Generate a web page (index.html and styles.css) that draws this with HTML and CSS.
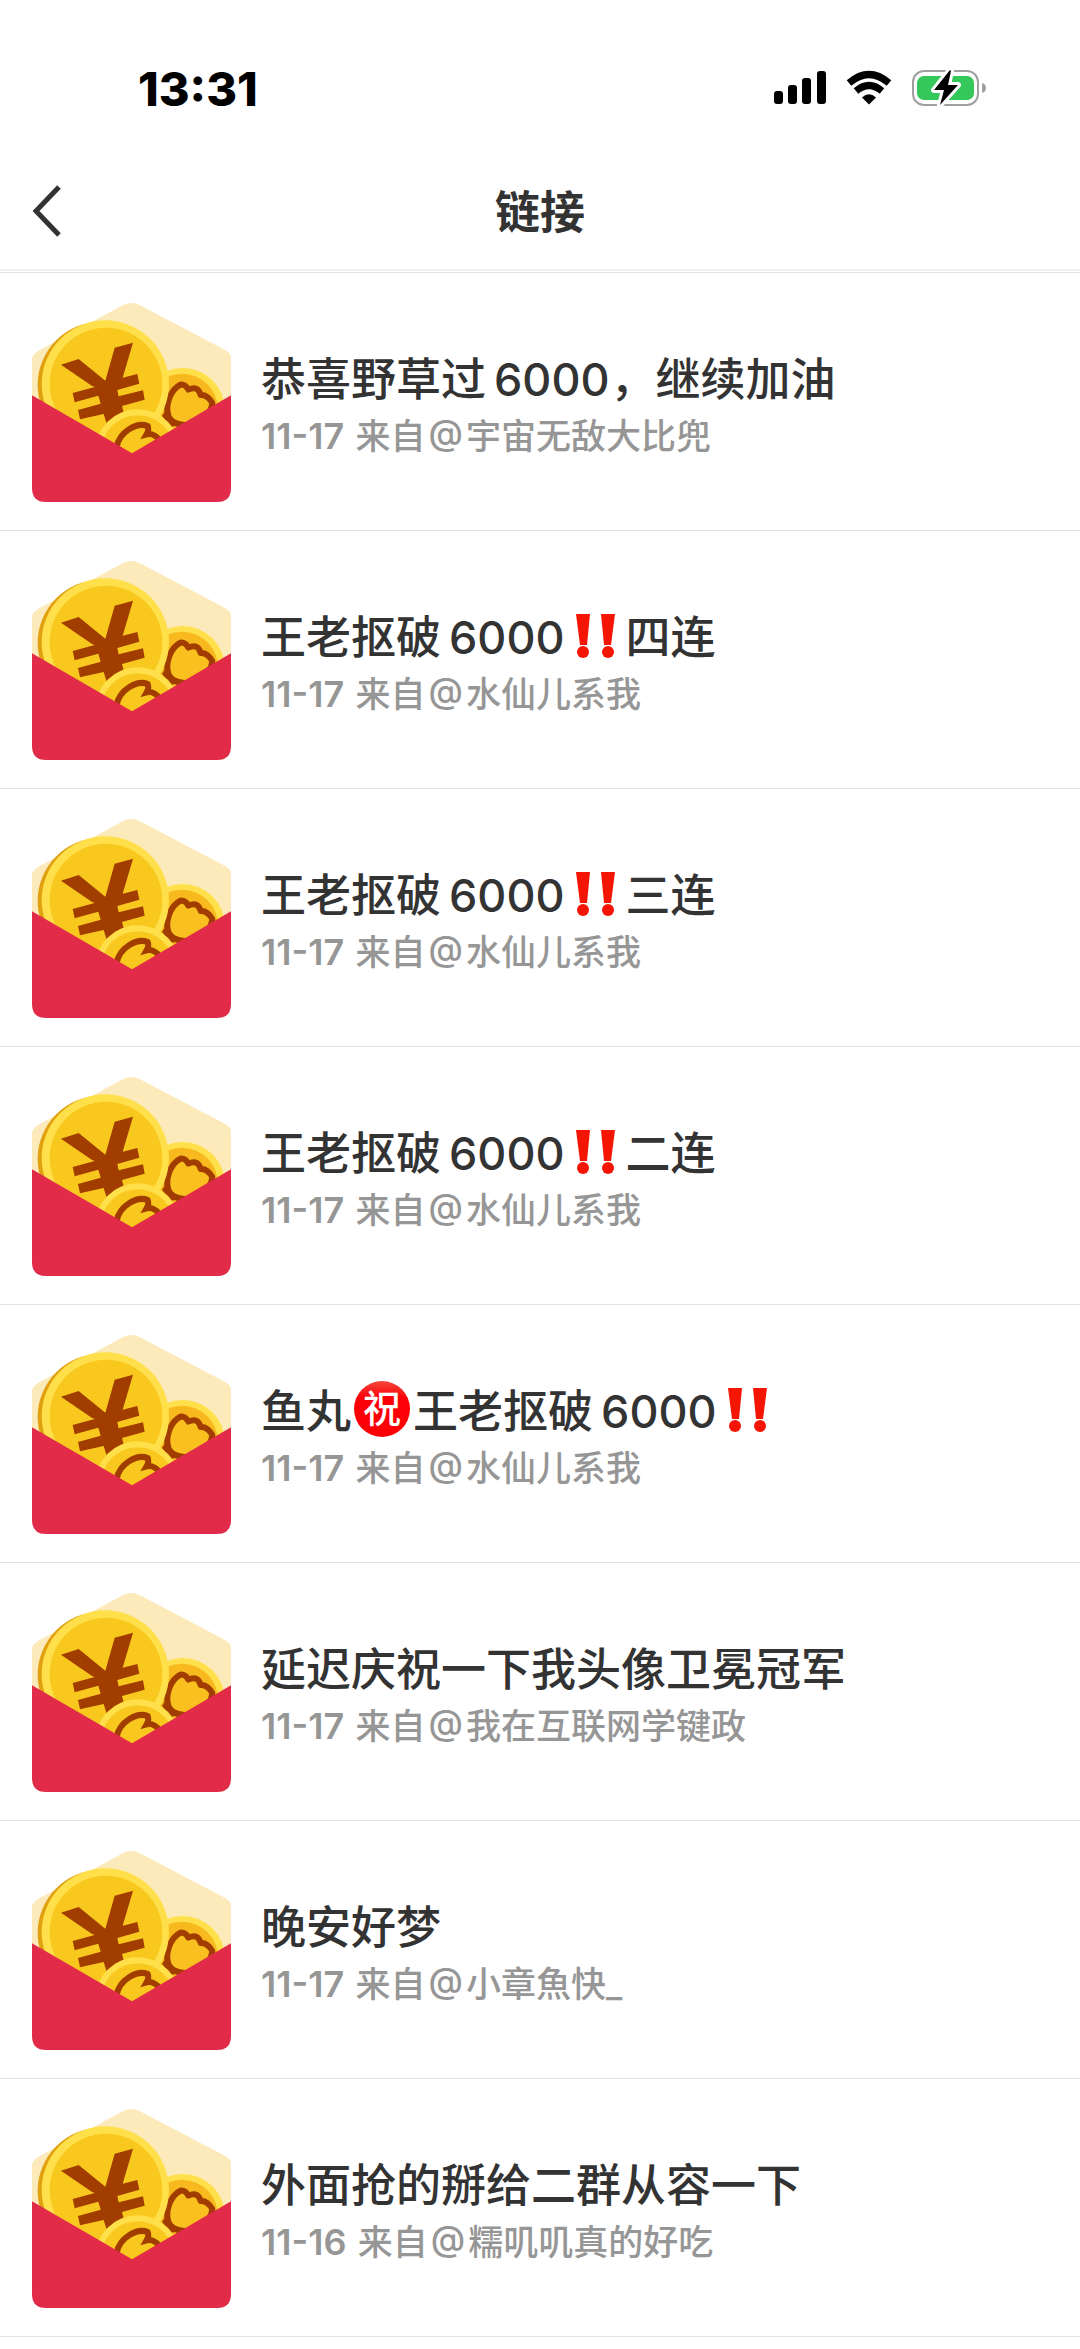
FILE: index.html
```html
<!DOCTYPE html>
<html lang="zh-CN">

<head>
    <meta charset="UTF-8">
    <meta name="viewport" content="width=device-width, initial-scale=1">
    <title>链接</title>
    <link rel="stylesheet" href="styles.css">
</head>

<body>
    <!-- Iconos reutilizados en la lista -->
    <svg class="sprite" aria-hidden="true">
        <symbol id="sobre" viewBox="96 128 597 597">
            <path fill="#fdeabb" d="M96 292Q102 276 126 265L368 135Q394 121 420 135L670 266Q693 278 693 290V450H96Z" />
            <circle cx="548" cy="450" r="127" fill="#ffe04b" />
            <circle cx="546" cy="448" r="108" fill="#f7b91e" />
            <path fill="#fac01f" stroke="#a23d00" stroke-width="18" stroke-linejoin="round" d="M512 480C486 440 515 385 541 373Q556 371 565 388Q594 374 602 404Q622 402 637 428Q634 455 610 475Q555 510 512 480Z" />
            <path fill="#a23d00" d="M507 405Q501 430 501 445L486 466L512 500L538 494L510 462Z" />
            <circle cx="303" cy="374" r="190" fill="#e0a00f" />
            <circle cx="316" cy="371" r="191" fill="#ffe04b" />
            <circle cx="318" cy="371" r="169" fill="#f9c81f" />
            <path fill="#a23d00" d="M183 313L236 296L316 361L344 262L399 247L368 352L412 341L418 370L352 389L356 408L429 390L434 418L366 437L372 460L320 490L311 461L240 477L234 449L302 430L295 406L224 426L218 398L284 380L275 376Z" />
            <circle cx="413" cy="575" r="128" fill="#ffe04b" />
            <circle cx="413" cy="575" r="110" fill="#f9c81f" />
            <path fill="none" stroke="#a23d00" stroke-width="18" d="M350 560C358 515 410 484 443 497Q448 508 440 522Q460 516 480 540" />
            <path fill="#e12b49" d="M96 405L396 579L693 405V683Q693 725 651 725H138Q96 725 96 683Z" />
        </symbol>
        <symbol id="exclama" viewBox="0 0 60 44">
            <path fill="#f51505" d="M10 0H24L21 31H14ZM35 0H49L45 31H38Z" />
            <circle cx="17" cy="38" r="6" fill="#f51505" />
            <circle cx="42" cy="38" r="6" fill="#f51505" />
        </symbol>
    </svg>

    <div class="estado">
        <time class="hora">13:31</time>
        <div class="iconos">
            <svg width="52" height="36" viewBox="0 0 52 36" aria-label="信号">
                <rect x="0" y="21" width="9" height="13" rx="3" />
                <rect x="14" y="15" width="9" height="19" rx="3" />
                <rect x="28" y="8" width="9" height="26" rx="3" />
                <rect x="43" y="1" width="9" height="33" rx="3" />
            </svg>
            <svg width="46" height="36" viewBox="0 0 46 36" aria-label="Wi-Fi">
                <g fill="none" stroke="#000">
                    <path stroke-width="7" d="M3 13Q23 -4 43 13" />
                    <path stroke-width="7" d="M10 21Q23 10 36 21" />
                </g>
                <path d="M16 27.5Q23 21 30 27.5L23 34.500Z" />
            </svg>
            <svg width="74" height="36" viewBox="0 0 74 36" aria-label="充电中">
                <rect x="1" y="1" width="65" height="34" rx="11" fill="none" stroke="#a0a0a0" stroke-width="2" />
                <rect x="5" y="6" width="57" height="24" rx="7" fill="#34c759" />
                <path fill="#a0a0a0" d="M70 13Q74 14 74 18T70 23Z" />
                <path fill="#000" stroke="#fff" stroke-width="6" stroke-linejoin="round" paint-order="stroke" d="M38 0L22 20H32L28 35L46 15H36L39 1Z" />
            </svg>
        </div>
    </div>

    <header class="nav">
        <button type="button" class="volver" aria-label="返回">
            <svg width="30" height="52" viewBox="0 0 30 52">
                <path fill="none" stroke="#333" stroke-width="5" d="M27 2L4 26L27 50" />
            </svg>
        </button>
        <h1>链接</h1>
    </header>

    <main class="lista">
        <a class="fila" href="#">
            <svg class="foto"><use href="#sobre" /></svg>
            <div class="texto">
                <h2>恭喜野草过<span class="num">6000</span>，继续加油</h2>
                <p><time>11-17</time> 来自<span class="arroba">@</span>宇宙无敌大比兜</p>
            </div>
        </a>
        <a class="fila" href="#">
            <svg class="foto"><use href="#sobre" /></svg>
            <div class="texto">
                <h2>王老抠破<span class="num">6000</span><svg class="emoji" role="img" aria-label="‼️"><use href="#exclama" /></svg>四连</h2>
                <p><time>11-17</time> 来自<span class="arroba">@</span>水仙儿系我</p>
            </div>
        </a>
        <a class="fila" href="#">
            <svg class="foto"><use href="#sobre" /></svg>
            <div class="texto">
                <h2>王老抠破<span class="num">6000</span><svg class="emoji" role="img" aria-label="‼️"><use href="#exclama" /></svg>三连</h2>
                <p><time>11-17</time> 来自<span class="arroba">@</span>水仙儿系我</p>
            </div>
        </a>
        <a class="fila" href="#">
            <svg class="foto"><use href="#sobre" /></svg>
            <div class="texto">
                <h2>王老抠破<span class="num">6000</span><svg class="emoji" role="img" aria-label="‼️"><use href="#exclama" /></svg>二连</h2>
                <p><time>11-17</time> 来自<span class="arroba">@</span>水仙儿系我</p>
            </div>
        </a>
        <a class="fila" href="#">
            <svg class="foto"><use href="#sobre" /></svg>
            <div class="texto">
                <h2>鱼丸<span class="sello">祝</span>王老抠破<span class="num">6000</span><svg class="emoji" role="img" aria-label="‼️"><use href="#exclama" /></svg></h2>
                <p><time>11-17</time> 来自<span class="arroba">@</span>水仙儿系我</p>
            </div>
        </a>
        <a class="fila" href="#">
            <svg class="foto"><use href="#sobre" /></svg>
            <div class="texto">
                <h2>延迟庆祝一下我头像卫冕冠军</h2>
                <p><time>11-17</time> 来自<span class="arroba">@</span>我在互联网学键政</p>
            </div>
        </a>
        <a class="fila" href="#">
            <svg class="foto"><use href="#sobre" /></svg>
            <div class="texto">
                <h2>晚安好梦</h2>
                <p><time>11-17</time> 来自<span class="arroba">@</span>小章魚快_</p>
            </div>
        </a>
        <a class="fila" href="#">
            <svg class="foto"><use href="#sobre" /></svg>
            <div class="texto">
                <h2>外面抢的掰给二群从容一下</h2>
                <p><time>11-16</time> 来自<span class="arroba">@</span>糯叽叽真的好吃</p>
            </div>
        </a>
    </main>
</body>

</html>
```
FILE: styles.css
```css
body {
    margin: 0;
    background-color: #fff;
    color: #333;
    font-family: Inter, "Noto Sans CJK SC", sans-serif;
}

.sprite {
    display: none;
}

.estado {
    display: flex;
    justify-content: space-between;
    align-items: center;
    height: 150px;
    padding: 26px 94px 0 138px;
    box-sizing: border-box;
    color: #000;
}

.hora {
    font-size: 47px;
    font-weight: 800;
}

.iconos {
    display: flex;
    align-items: center;
    gap: 20px;
}

.nav {
    display: grid;
    grid-template-columns: 1fr auto 1fr;
    align-items: center;
    height: 121px;
    padding: 2px 32px 0;
    box-sizing: border-box;
    border-bottom: 2px solid #efefef;
}

.volver {
    justify-self: start;
    display: flex;
    padding: 0;
    border: none;
    background: none;
    cursor: pointer;
}

.nav h1 {
    margin: 0;
    padding-top: 4px;
    font-size: 45px;
    line-height: 66px;
    font-weight: 700;
}

.lista {
    margin-top: 1px;
    border-top: 1px solid #e0e0e0;
}

.fila {
    display: flex;
    align-items: center;
    gap: 30px;
    padding: 30px 32px 28px;
    border-bottom: 1px solid #e0e0e0;
    color: inherit;
    text-decoration: none;
}

.foto {
    flex: none;
    width: 199px;
    height: 199px;
}

.texto h2 {
    margin: 0;
    font-size: 45px;
    line-height: 66px;
    font-weight: 500;
}

.texto p {
    margin: 0;
    font-size: 35px;
    line-height: 46px;
    font-weight: 500;
    color: #969696;
}

.texto time {
    margin-right: 2px;
    font-size: 36px;
    font-weight: 600;
}

.num {
    margin: 0 1px 0 8px;
}

.arroba {
    margin: 0 3px;
    font-feature-settings: "case";
}

.emoji {
    width: 60px;
    height: 44px;
    vertical-align: -4px;
}

.sello {
    display: inline-block;
    width: 56px;
    height: 56px;
    margin: 0 3px;
    border-radius: 50%;
    background: linear-gradient(#f4493c, #fb0007 30%);
    color: #fff;
    font-size: 38px;
    line-height: 54px;
    text-align: center;
    vertical-align: 6px;
}
```
